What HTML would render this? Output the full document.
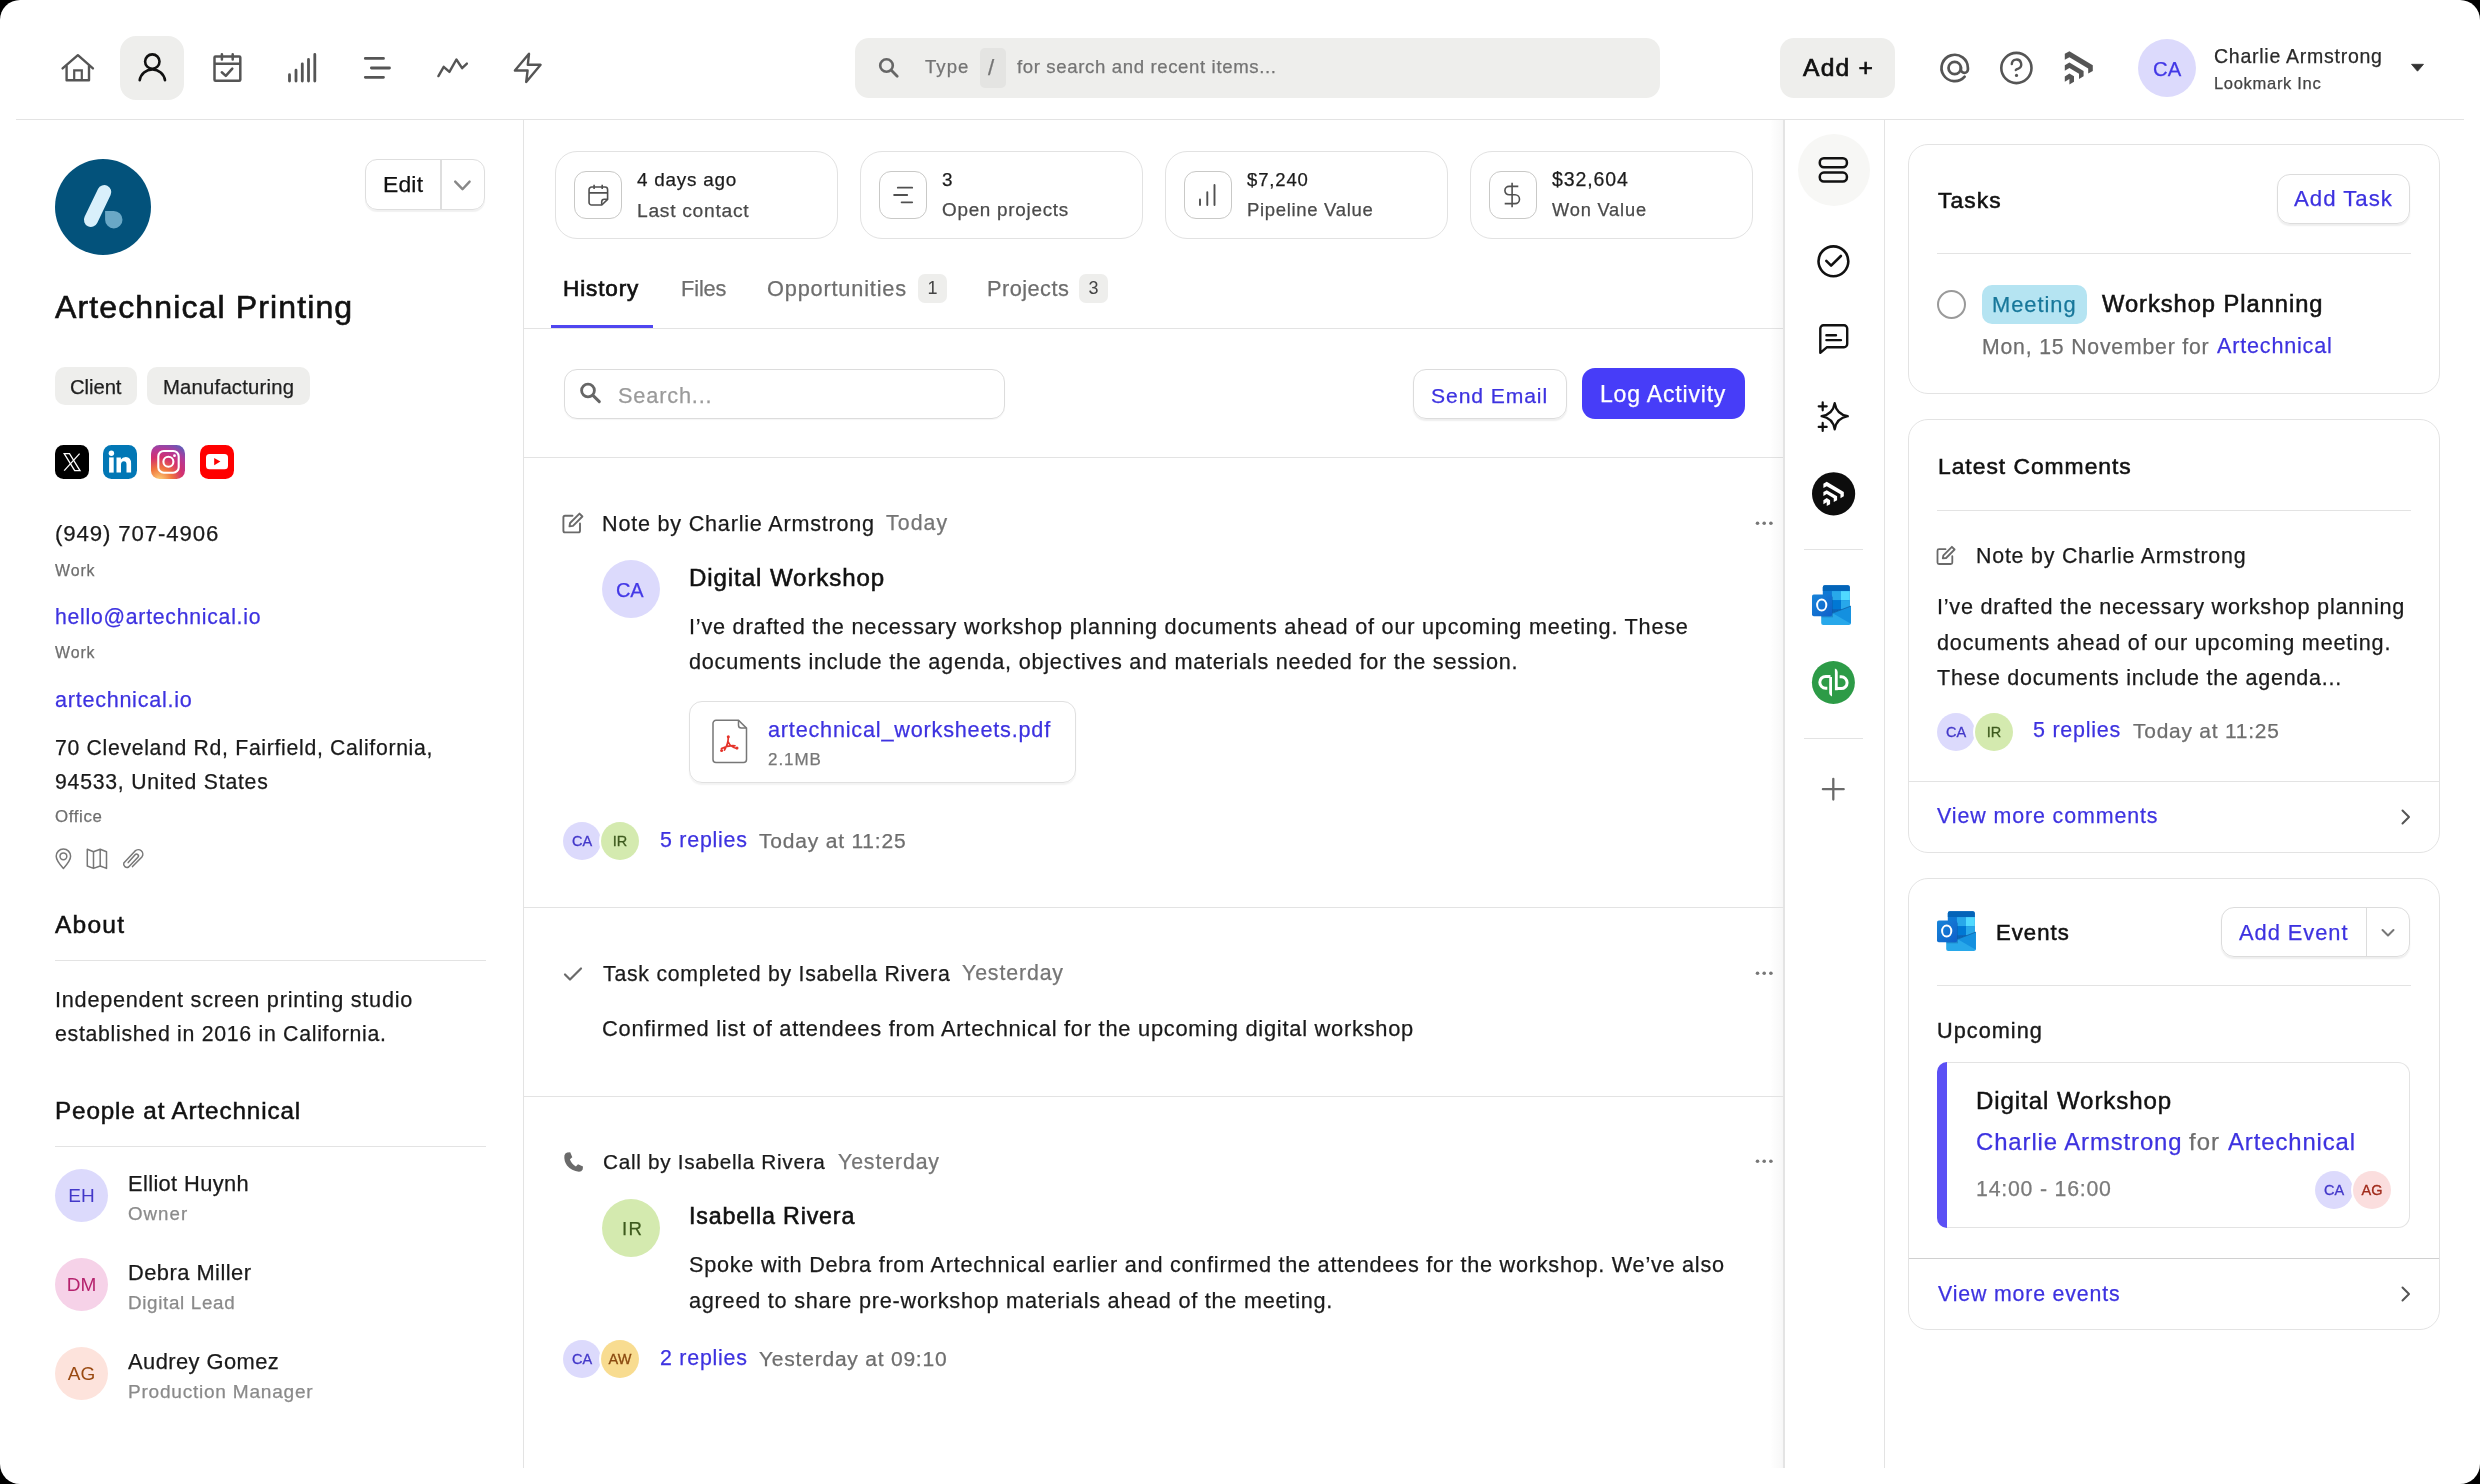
<!DOCTYPE html>
<html><head><meta charset="utf-8"><style>
html,body{margin:0;padding:0;background:#000;}
body{width:2480px;height:1484px;overflow:hidden;position:relative;font-family:"Liberation Sans",sans-serif;}
.frame{position:absolute;left:0;top:0;width:2480px;height:1484px;background:#fff;border-radius:20px;overflow:hidden;}
.t{position:absolute;white-space:nowrap;-webkit-font-smoothing:antialiased;will-change:transform;}
.b{position:absolute;}
</style></head><body><div class="frame">
<div class="b" style="left:16px;top:119px;width:2448px;height:1px;background:#e3e3e3"></div>
<div class="b" style="left:120px;top:36px;width:64px;height:64px;background:#eeeeec;border-radius:16px"></div>
<svg class="b" style="left:0px;top:0px" width="600" height="120" viewBox="0 0 600 120" fill="none"><path d="M62.6 68.4 L77.9 55.2 L92.9 68.4" stroke="#555555" stroke-width="2.4" stroke-linecap="round" stroke-linejoin="round"/>
<path d="M66.6 65.5 V80.3 H89 V65.5" stroke="#555555" stroke-width="2.4" stroke-linejoin="round"/>
<path d="M74.2 80.3 V70.4 H81.8 V80.3" stroke="#555555" stroke-width="2.2"/>
<circle cx="152.3" cy="61.6" r="7.2" stroke="#111" stroke-width="2.6"/>
<path d="M139.7 80.3 A12.8 12.8 0 0 1 165 80.3" stroke="#111" stroke-width="2.6" stroke-linecap="round"/>
<rect x="214.5" y="56.5" width="25.8" height="24.2" rx="1" stroke="#555555" stroke-width="2.5"/>
<path d="M214.5 63.8 H240.3" stroke="#555555" stroke-width="2.5"/>
<path d="M221.9 54.2 V59.4 M232.7 54.2 V59.4" stroke="#555555" stroke-width="2.5" stroke-linecap="round"/>
<path d="M221.8 72.3 L225.8 75.9 L232.3 68.6" stroke="#555555" stroke-width="2.5" stroke-linecap="round" stroke-linejoin="round"/>
<path d="M289.5 81 V74.7 M296 81 V70.2 M302.3 81 V63.8 M308.5 81 V59.4 M314.8 81 V54.5" stroke="#555555" stroke-width="2.8" stroke-linecap="round"/>
<path d="M365.3 58.4 H383.5 M371.4 68 H389.5 M365.3 77.3 H383.5" stroke="#555555" stroke-width="2.8" stroke-linecap="round"/>
<path d="M438.4 76.1 L443.7 66.8 L449.4 71.9 L456.4 59.5 L462.1 68.2 L466.9 63.6" stroke="#555555" stroke-width="2.4" stroke-linecap="round" stroke-linejoin="round"/>
<path d="M529 53.8 L514.9 70.5 H527.6 L526.2 82 L540.6 64.8 H527.8 Z" stroke="#555555" stroke-width="2.4" stroke-linejoin="round"/></svg>
<div class="b" style="left:855px;top:38px;width:805px;height:60px;background:#eeeeec;border-radius:14px"></div>
<div class="b" style="left:980px;top:48px;width:26px;height:40px;background:#e4e4e2;border-radius:5px"></div>
<svg class="b" style="left:870px;top:50px" width="40" height="40" viewBox="0 0 40 40" fill="none"><circle cx="16.5" cy="15.5" r="6.3" stroke="#666" stroke-width="2.6"/><path d="M21.3 20.3 L27.2 26.2" stroke="#666" stroke-width="2.8" stroke-linecap="round"/></svg>
<div class="t" style="left:924.5px;top:58.46px;font-size:18.60px;line-height:18.60px;color:#747474;-webkit-text-stroke:0.25px #747474;letter-spacing:1.012px;">Type</div>
<div class="t" style="left:987.5px;top:56.61px;font-size:22.32px;line-height:22.32px;color:#747474;-webkit-text-stroke:0.25px #747474;">/</div>
<div class="t" style="left:1016.5px;top:58.46px;font-size:18.60px;line-height:18.60px;color:#747474;-webkit-text-stroke:0.25px #747474;letter-spacing:0.625px;">for search and recent items...</div>
<div class="b" style="left:1780px;top:38px;width:115px;height:60px;background:#eeeeec;border-radius:14px"></div>
<div class="t" style="left:1803px;top:56.14px;font-size:24.64px;line-height:24.64px;color:#111;-webkit-text-stroke:0.70px #111;letter-spacing:1.225px;">Add +</div>
<div class="t" style="left:2214.4px;top:46.97px;font-size:19.53px;line-height:19.53px;color:#2a2a2a;-webkit-text-stroke:0.25px #2a2a2a;letter-spacing:0.735px;">Charlie Armstrong</div>
<div class="t" style="left:2214.4px;top:75.99px;font-size:16.55px;line-height:16.55px;color:#444;-webkit-text-stroke:0.25px #444;letter-spacing:0.680px;">Lookmark Inc</div>
<div class="b" style="left:2138px;top:39px;width:58px;height:58px;background:#dcdafc;border-radius:50%"></div>
<div class="t" style="left:2152.6px;top:58.84px;font-size:20.27px;line-height:20.27px;color:#4338e6;-webkit-text-stroke:0.25px #4338e6;letter-spacing:0.235px;">CA</div>
<svg class="b" style="left:2404px;top:58px" width="26" height="20" viewBox="0 0 26 20" fill="none"><path d="M7.5 6.3 H19.5 L13.5 13.2 Z" fill="#333" stroke="#333" stroke-width="0.8" stroke-linejoin="round"/></svg>
<svg class="b" style="left:0px;top:0px" width="2480" height="120" viewBox="0 0 2480 120" fill="none"><circle cx="1954.7" cy="68" r="6.2" stroke="#555" stroke-width="2.7"/>
<path d="M1960.9 67 V69.4 A3.5 3.5 0 0 0 1967.9 69.4 V68 A13.2 13.2 0 1 0 1964.66 76.66" stroke="#555" stroke-width="2.7" stroke-linecap="round"/>
<circle cx="2016.4" cy="68" r="15.1" stroke="#555" stroke-width="2.6"/>
<path d="M2011.8 64.1 A4.7 4.7 0 1 1 2018.3 68.6 Q2016.4 69.3 2015.8 70" stroke="#555" stroke-width="2.4" stroke-linecap="round"/>
<circle cx="2016.5" cy="75.4" r="1.6" fill="#555"/>
<path d="M2064.8 53.8 L2069.4 51.2 L2092.8 65.2 V71 L2088.2 73.6 V68.4 L2069.4 57.2 L2064.8 59.8 Z" fill="#555"/>
<path d="M2064.8 65.3 L2069.4 62.6 L2083.6 71 V76.3 L2079 78.9 V73.7 L2069.4 68 L2064.8 70.7 Z" fill="#555"/>
<path d="M2064.8 76.4 L2069.4 73.4 L2074 76.3 V81.8 L2069.4 84.5 V79.1 L2064.8 81.8 Z" fill="#555"/></svg>
<div class="b" style="left:523px;top:120px;width:1px;height:1348px;background:#e3e3e3"></div>
<svg class="b" style="left:55px;top:159px" width="96" height="96" viewBox="0 0 96 96" fill="none"><circle cx="48" cy="48" r="48" fill="#03527b"/><path d="M49.3 33 L35.9 60.9" stroke="#d9f0fb" stroke-width="14" stroke-linecap="round"/><path d="M50.1 52 H58.8 A8.7 8.7 0 1 1 50.1 60.7 Z" fill="#6aa8c6"/></svg>
<div class="b" style="left:365px;top:159px;width:120px;height:51px;box-sizing:border-box;border:1.5px solid #dedede;border-radius:12px;box-shadow:0 1.5px 1px rgba(0,0,0,0.06)"></div>
<div class="b" style="left:440px;top:160px;width:1.5px;height:50px;background:#dedede"></div>
<div class="t" style="left:383.3px;top:172.83px;font-size:22.88px;line-height:22.88px;color:#111;-webkit-text-stroke:0.25px #111;letter-spacing:0.193px;">Edit</div>
<svg class="b" style="left:450px;top:174px" width="24" height="20" viewBox="0 0 24 20" fill="none"><path d="M5.2 7.6 L12.5 15.2 L19.6 7.6" stroke="#888" stroke-width="2.4" stroke-linecap="round" stroke-linejoin="round"/></svg>
<div class="t" style="left:55px;top:291.24px;font-size:32.09px;line-height:32.09px;color:#111;-webkit-text-stroke:0.60px #111;letter-spacing:1.095px;">Artechnical Printing</div>
<div class="b" style="left:55px;top:367px;width:82px;height:38px;background:#eeeeec;border-radius:10px"></div>
<div class="b" style="left:147px;top:367px;width:163px;height:38px;background:#eeeeec;border-radius:10px"></div>
<div class="t" style="left:69.6px;top:376.84px;font-size:20.27px;line-height:20.27px;color:#1f1f1f;-webkit-text-stroke:0.25px #1f1f1f;letter-spacing:-0.066px;">Client</div>
<div class="t" style="left:162.6px;top:376.84px;font-size:20.27px;line-height:20.27px;color:#1f1f1f;-webkit-text-stroke:0.25px #1f1f1f;letter-spacing:0.211px;">Manufacturing</div>
<svg class="b" style="left:55px;top:445px" width="34" height="34" viewBox="0 0 34 34" fill="none"><rect width="34" height="34" rx="8.5" fill="#000"/><path d="M9.2 8.6 H14.5 L25 25.6 H19.7 Z" stroke="#fff" stroke-width="1.3" fill="none"/><path d="M24.6 8.6 L9.2 25.6" stroke="#fff" stroke-width="1.3"/></svg>
<svg class="b" style="left:103px;top:445px" width="34" height="34" viewBox="0 0 34 34" fill="none"><rect width="34" height="34" rx="8.5" fill="#0277b5"/><circle cx="8.4" cy="8.2" r="2.7" fill="#fff"/><rect x="6.1" y="12.4" width="4.6" height="15.2" fill="#fff"/><path d="M13.5 12.4 H17.9 V14.6 Q19.3 12 22.8 12 Q28.1 12 28.1 18.5 V27.6 H23.5 V19.5 Q23.5 16.3 20.9 16.3 Q18 16.3 18 19.8 V27.6 H13.5 Z" fill="#fff"/></svg>
<svg class="b" style="left:151px;top:445px" width="34" height="34" viewBox="0 0 34 34" fill="none"><defs><radialGradient id="ig" cx="0.25" cy="1.05" r="1.25"><stop offset="0" stop-color="#fdd57c"/><stop offset="0.3" stop-color="#f0763e"/><stop offset="0.55" stop-color="#d3306e"/><stop offset="0.75" stop-color="#b23a9a"/><stop offset="1" stop-color="#4f63c0"/></radialGradient></defs><rect width="34" height="34" rx="8.5" fill="url(#ig)"/><rect x="7.3" y="6" width="20.4" height="21.7" rx="5.5" stroke="#fff" stroke-width="2.1"/><circle cx="17.4" cy="16.8" r="5" stroke="#fff" stroke-width="2.1"/><circle cx="23.5" cy="10.7" r="1.4" fill="#fff"/></svg>
<svg class="b" style="left:200px;top:445px" width="34" height="34" viewBox="0 0 34 34" fill="none"><rect width="34" height="34" rx="8.5" fill="#ff0000"/><rect x="6" y="9" width="22" height="15.3" rx="3.5" fill="#fff"/><path d="M14.2 12.9 V20.2 L20.4 16.6 Z" fill="#ff0000"/></svg>
<div class="t" style="left:55.2px;top:522.98px;font-size:22.23px;line-height:22.23px;color:#1a1a1a;-webkit-text-stroke:0.25px #1a1a1a;letter-spacing:0.880px;">(949) 707-4906</div>
<div class="t" style="left:55.2px;top:562.54px;font-size:15.90px;line-height:15.90px;color:#6e6e6e;-webkit-text-stroke:0.25px #6e6e6e;letter-spacing:0.924px;">Work</div>
<div class="t" style="left:55.2px;top:606.05px;font-size:21.20px;line-height:21.20px;color:#3d32e0;-webkit-text-stroke:0.25px #3d32e0;letter-spacing:0.758px;">hello@artechnical.io</div>
<div class="t" style="left:55.2px;top:644.94px;font-size:15.90px;line-height:15.90px;color:#6e6e6e;-webkit-text-stroke:0.25px #6e6e6e;letter-spacing:0.924px;">Work</div>
<div class="t" style="left:55.2px;top:688.74px;font-size:21.58px;line-height:21.58px;color:#3d32e0;-webkit-text-stroke:0.25px #3d32e0;letter-spacing:0.736px;">artechnical.io</div>
<div class="t" style="left:55.2px;top:737.05px;font-size:21.20px;line-height:21.20px;color:#1a1a1a;-webkit-text-stroke:0.25px #1a1a1a;letter-spacing:0.696px;">70 Cleveland Rd, Fairfield, California,</div>
<div class="t" style="left:55.2px;top:771.05px;font-size:21.20px;line-height:21.20px;color:#1a1a1a;-webkit-text-stroke:0.25px #1a1a1a;letter-spacing:0.784px;">94533, United States</div>
<div class="t" style="left:55.2px;top:808.75px;font-size:16.83px;line-height:16.83px;color:#6e6e6e;-webkit-text-stroke:0.25px #6e6e6e;letter-spacing:0.657px;">Office</div>
<svg class="b" style="left:50px;top:845px" width="100" height="30" viewBox="0 0 100 30" fill="none"><path d="M13.4 23.4 Q6.2 15.5 6.2 11.2 A7.2 7.2 0 0 1 20.6 11.2 Q20.6 15.5 13.4 23.4 Z" stroke="#777" stroke-width="1.5" stroke-linejoin="round"/><circle cx="13.4" cy="11.3" r="3.4" stroke="#777" stroke-width="1.5"/>
<path d="M37.3 4.3 L43.5 6.7 L50.2 4.3 L56.5 6.7 V23.4 L50.2 21 L43.5 23.4 L37.3 21 Z M43.5 6.7 V23.4 M50.2 4.3 V21" stroke="#777" stroke-width="1.5" stroke-linejoin="round"/>
<path d="M82.5 21.6 L91.9 11.9 A4.55 4.55 0 0 0 85.1 5.9 L73.8 18 A3.4 3.4 0 0 0 78.6 22 L87.9 12.3 A1.7 1.7 0 0 0 85.1 9.7 L78.2 17.6" stroke="#777" stroke-width="1.5" stroke-linecap="round" stroke-linejoin="round"/></svg>
<div class="t" style="left:54.8px;top:913.22px;font-size:24.55px;line-height:24.55px;color:#111;-webkit-text-stroke:0.50px #111;letter-spacing:1.207px;">About</div>
<div class="b" style="left:55px;top:960px;width:431px;height:1px;background:#e3e3e3"></div>
<div class="t" style="left:54.8px;top:988.66px;font-size:21.67px;line-height:21.67px;color:#1a1a1a;-webkit-text-stroke:0.25px #1a1a1a;letter-spacing:0.758px;">Independent screen printing studio</div>
<div class="t" style="left:54.8px;top:1024.47px;font-size:21.30px;line-height:21.30px;color:#1a1a1a;-webkit-text-stroke:0.25px #1a1a1a;letter-spacing:0.702px;">established in 2016 in California.</div>
<div class="t" style="left:54.8px;top:1099.15px;font-size:24.27px;line-height:24.27px;color:#111;-webkit-text-stroke:0.50px #111;letter-spacing:0.858px;">People at Artechnical</div>
<div class="b" style="left:55px;top:1146px;width:431px;height:1px;background:#e3e3e3"></div>
<div class="b" style="left:55px;top:1169px;width:53px;height:53px;background:#dcdafc;border-radius:50%"></div>
<div class="t" style="left:55px;top:1169px;width:53px;height:53px;line-height:53px;text-align:center;font-size:19px;color:#4338c9">EH</div>
<div class="t" style="left:128px;top:1172.50px;font-size:21.86px;line-height:21.86px;color:#1a1a1a;-webkit-text-stroke:0.25px #1a1a1a;letter-spacing:0.361px;">Elliot Huynh</div>
<div class="t" style="left:128px;top:1204.68px;font-size:18.69px;line-height:18.69px;color:#8a8a8a;-webkit-text-stroke:0.25px #8a8a8a;letter-spacing:1.036px;">Owner</div>
<div class="b" style="left:55px;top:1258px;width:53px;height:53px;background:#f6d2e8;border-radius:50%"></div>
<div class="t" style="left:55px;top:1258px;width:53px;height:53px;line-height:53px;text-align:center;font-size:19px;color:#b5226d">DM</div>
<div class="t" style="left:128px;top:1261.50px;font-size:21.86px;line-height:21.86px;color:#1a1a1a;-webkit-text-stroke:0.25px #1a1a1a;letter-spacing:0.463px;">Debra Miller</div>
<div class="t" style="left:128px;top:1293.60px;font-size:18.79px;line-height:18.79px;color:#8a8a8a;-webkit-text-stroke:0.25px #8a8a8a;letter-spacing:0.679px;">Digital Lead</div>
<div class="b" style="left:55px;top:1347px;width:53px;height:53px;background:#fde3dc;border-radius:50%"></div>
<div class="t" style="left:55px;top:1347px;width:53px;height:53px;line-height:53px;text-align:center;font-size:19px;color:#9a4a12">AG</div>
<div class="t" style="left:128px;top:1350.50px;font-size:21.86px;line-height:21.86px;color:#1a1a1a;-webkit-text-stroke:0.25px #1a1a1a;letter-spacing:0.452px;">Audrey Gomez</div>
<div class="t" style="left:128px;top:1382.36px;font-size:19.07px;line-height:19.07px;color:#8a8a8a;-webkit-text-stroke:0.25px #8a8a8a;letter-spacing:0.760px;">Production Manager</div>
<div class="b" style="left:555px;top:151px;width:283px;height:88px;box-sizing:border-box;border:1.5px solid #e2e2e2;border-radius:22px"></div>
<div class="b" style="left:573.5px;top:170.5px;width:48px;height:48px;box-sizing:border-box;border:1.5px solid #c9c9c7;border-radius:12px"></div>
<svg class="b" style="left:573.5px;top:170.5px" width="48" height="48" viewBox="0 0 48 48" fill="none"><path d="M17.66 16.06 H31 A2.6 2.6 0 0 1 33.6 18.66 V28.4 L27.8 34 H17.66 A2.6 2.6 0 0 1 15.06 31.4 V18.66 A2.6 2.6 0 0 1 17.66 16.06 Z" stroke="#505050" stroke-width="1.6" stroke-linejoin="round"/><path d="M15.06 21.9 H33.6 M20.1 13.8 V18.1 M28.2 13.8 V18.1" stroke="#505050" stroke-width="1.6"/><path d="M27.7 33.8 V30.8 A2.6 2.6 0 0 1 30.3 28.2 H33.4" stroke="#505050" stroke-width="1.6" stroke-linejoin="round"/></svg>
<div class="t" style="left:637px;top:171.02px;font-size:18.88px;line-height:18.88px;color:#1c1c1c;-webkit-text-stroke:0.25px #1c1c1c;letter-spacing:0.772px;">4 days ago</div>
<div class="t" style="left:637px;top:200.50px;font-size:19.25px;line-height:19.25px;color:#4a4a4a;-webkit-text-stroke:0.25px #4a4a4a;letter-spacing:0.710px;">Last contact</div>
<div class="b" style="left:860px;top:151px;width:283px;height:88px;box-sizing:border-box;border:1.5px solid #e2e2e2;border-radius:22px"></div>
<div class="b" style="left:878.5px;top:170.5px;width:48px;height:48px;box-sizing:border-box;border:1.5px solid #c9c9c7;border-radius:12px"></div>
<svg class="b" style="left:878.5px;top:170.5px" width="48" height="48" viewBox="0 0 48 48" fill="none"><path d="M18.8 16.7 H33.2 M15.1 24 H28.2 M22.6 31.3 H33.2" stroke="#505050" stroke-width="1.8" stroke-linecap="round"/></svg>
<div class="t" style="left:942px;top:171.02px;font-size:18.88px;line-height:18.88px;color:#1c1c1c;-webkit-text-stroke:0.25px #1c1c1c;">3</div>
<div class="t" style="left:942px;top:200.82px;font-size:18.88px;line-height:18.88px;color:#4a4a4a;-webkit-text-stroke:0.25px #4a4a4a;letter-spacing:0.737px;">Open projects</div>
<div class="b" style="left:1165px;top:151px;width:283px;height:88px;box-sizing:border-box;border:1.5px solid #e2e2e2;border-radius:22px"></div>
<div class="b" style="left:1183.5px;top:170.5px;width:48px;height:48px;box-sizing:border-box;border:1.5px solid #c9c9c7;border-radius:12px"></div>
<svg class="b" style="left:1183.5px;top:170.5px" width="48" height="48" viewBox="0 0 48 48" fill="none"><path d="M16 34 V28.4 M23.3 34 V21.1 M30.5 34 V14" stroke="#505050" stroke-width="1.9" stroke-linecap="round"/></svg>
<div class="t" style="left:1247px;top:171.33px;font-size:18.51px;line-height:18.51px;color:#1c1c1c;-webkit-text-stroke:0.25px #1c1c1c;letter-spacing:0.852px;">$7,240</div>
<div class="t" style="left:1247px;top:201.13px;font-size:18.51px;line-height:18.51px;color:#4a4a4a;-webkit-text-stroke:0.25px #4a4a4a;letter-spacing:0.677px;">Pipeline Value</div>
<div class="b" style="left:1470px;top:151px;width:283px;height:88px;box-sizing:border-box;border:1.5px solid #e2e2e2;border-radius:22px"></div>
<div class="b" style="left:1488.5px;top:170.5px;width:48px;height:48px;box-sizing:border-box;border:1.5px solid #c9c9c7;border-radius:12px"></div>
<svg class="b" style="left:1488.5px;top:170.5px" width="48" height="48" viewBox="0 0 48 48" fill="none"><path d="M23.1 11.7 V36.3" stroke="#505050" stroke-width="1.6"/><path d="M29.3 15.4 H20.1 A4.2 4.2 0 0 0 20.1 23.8 H26.1 A4.4 4.4 0 0 1 26.1 32.6 H15.7" stroke="#505050" stroke-width="1.6"/></svg>
<div class="t" style="left:1552px;top:170.47px;font-size:19.53px;line-height:19.53px;color:#1c1c1c;-webkit-text-stroke:0.25px #1c1c1c;letter-spacing:0.886px;">$32,604</div>
<div class="t" style="left:1552px;top:201.37px;font-size:18.23px;line-height:18.23px;color:#4a4a4a;-webkit-text-stroke:0.25px #4a4a4a;letter-spacing:0.823px;">Won Value</div>
<div class="t" style="left:563.4px;top:277.75px;font-size:22.51px;line-height:22.51px;color:#111;-webkit-text-stroke:0.70px #111;letter-spacing:0.878px;">History</div>
<div class="t" style="left:680.5px;top:278.38px;font-size:21.76px;line-height:21.76px;color:#6e6e6e;-webkit-text-stroke:0.25px #6e6e6e;letter-spacing:-0.111px;">Files</div>
<div class="t" style="left:767px;top:278.38px;font-size:21.76px;line-height:21.76px;color:#6e6e6e;-webkit-text-stroke:0.25px #6e6e6e;letter-spacing:0.812px;">Opportunities</div>
<div class="t" style="left:986.6px;top:278.38px;font-size:21.76px;line-height:21.76px;color:#6e6e6e;-webkit-text-stroke:0.25px #6e6e6e;letter-spacing:0.456px;">Projects</div>
<div class="b" style="left:918px;top:274.3px;width:29px;height:28.5px;background:#eeeeec;border-radius:7px"></div>
<div class="t" style="left:918px;top:274.3px;width:29px;height:28.5px;line-height:28.5px;text-align:center;font-size:18px;color:#444">1</div>
<div class="b" style="left:1079px;top:274.3px;width:29px;height:28.5px;background:#eeeeec;border-radius:7px"></div>
<div class="t" style="left:1079px;top:274.3px;width:29px;height:28.5px;line-height:28.5px;text-align:center;font-size:18px;color:#444">3</div>
<div class="b" style="left:524px;top:328px;width:1260px;height:1px;background:#e3e3e3"></div>
<div class="b" style="left:551px;top:325px;width:102px;height:3px;background:#4f46f0"></div>
<div class="b" style="left:563.5px;top:368.5px;width:441px;height:50px;box-sizing:border-box;border:1.5px solid #dcdcdc;border-radius:13px;box-shadow:0 1px 1px rgba(0,0,0,0.04)"></div>
<svg class="b" style="left:575px;top:375px" width="36" height="36" viewBox="0 0 36 36" fill="none"><circle cx="13" cy="15.5" r="6.4" stroke="#666" stroke-width="2.8"/><path d="M17.9 20.4 L24.3 26.6" stroke="#666" stroke-width="3" stroke-linecap="round"/></svg>
<div class="t" style="left:617.5px;top:384.58px;font-size:21.76px;line-height:21.76px;color:#9a9a9a;-webkit-text-stroke:0.25px #9a9a9a;letter-spacing:0.819px;">Search...</div>
<div class="b" style="left:1412.5px;top:368.5px;width:154px;height:50px;box-sizing:border-box;border:1.5px solid #dcdcdc;border-radius:13px;box-shadow:0 1.5px 1.5px rgba(0,0,0,0.07)"></div>
<div class="t" style="left:1431.3px;top:385.13px;font-size:21.11px;line-height:21.11px;color:#3d32e0;-webkit-text-stroke:0.25px #3d32e0;letter-spacing:0.903px;">Send Email</div>
<div class="b" style="left:1581.5px;top:368px;width:163.5px;height:51px;background:#473df8;border-radius:13px"></div>
<div class="t" style="left:1600.3px;top:383.48px;font-size:23.06px;line-height:23.06px;color:#fff;-webkit-text-stroke:0.25px #fff;letter-spacing:0.798px;">Log Activity</div>
<div class="b" style="left:524px;top:457px;width:1260px;height:1px;background:#e3e3e3"></div>
<div class="b" style="left:1770px;top:120px;width:13px;height:1348px;background:linear-gradient(to right, rgba(0,0,0,0), rgba(0,0,0,0.03))"></div>
<div class="b" style="left:1783px;top:120px;width:2px;height:1348px;background:#e4e4e4"></div>
<svg class="b" style="left:560px;top:510px" width="28" height="28" viewBox="0 0 28 28" fill="none"><path d="M12.5 5.8 H5 A1.6 1.6 0 0 0 3.4 7.4 V20.8 A1.6 1.6 0 0 0 5 22.4 H18.4 A1.6 1.6 0 0 0 20 20.8 V13.5" stroke="#6a6a6a" stroke-width="1.9" stroke-linecap="round"/><path d="M9.5 16.3 L10.1 13 L19.5 3.6 L22.4 6.5 L13 15.9 Z" stroke="#6a6a6a" stroke-width="1.9" stroke-linejoin="round"/></svg>
<div class="t" style="left:602.2px;top:512.74px;font-size:21.58px;line-height:21.58px;color:#1a1a1a;-webkit-text-stroke:0.25px #1a1a1a;letter-spacing:0.793px;">Note by Charlie Armstrong</div>
<div class="t" style="left:886px;top:512.97px;font-size:21.30px;line-height:21.30px;color:#757575;-webkit-text-stroke:0.25px #757575;letter-spacing:1.069px;">Today</div>
<svg class="b" style="left:1750px;top:515px" width="30" height="16" viewBox="0 0 30 16" fill="none"><circle cx="7.5" cy="8.2" r="1.8" fill="#777"/><circle cx="14.2" cy="8.2" r="1.8" fill="#777"/><circle cx="20.9" cy="8.2" r="1.8" fill="#777"/></svg>
<div class="b" style="left:601.5px;top:560px;width:58px;height:58px;background:#dcdafc;border-radius:50%"></div>
<div class="t" style="left:616.3px;top:580.07px;font-size:20.00px;line-height:20.00px;color:#4338e6;-webkit-text-stroke:0.25px #4338e6;letter-spacing:-0.077px;">CA</div>
<div class="t" style="left:689.4px;top:566.31px;font-size:24.09px;line-height:24.09px;color:#111;-webkit-text-stroke:0.55px #111;letter-spacing:0.911px;">Digital Workshop</div>
<div class="t" style="left:689.4px;top:615.96px;font-size:21.67px;line-height:21.67px;color:#1a1a1a;-webkit-text-stroke:0.25px #1a1a1a;letter-spacing:0.777px;">I’ve drafted the necessary workshop planning documents ahead of our upcoming meeting. These</div>
<div class="t" style="left:689.4px;top:651.16px;font-size:21.67px;line-height:21.67px;color:#1a1a1a;-webkit-text-stroke:0.25px #1a1a1a;letter-spacing:0.754px;">documents include the agenda, objectives and materials needed for the session.</div>
<div class="b" style="left:689px;top:701px;width:387px;height:81.5px;box-sizing:border-box;border:1.5px solid #e0e0e0;border-radius:13px;box-shadow:0 1.5px 1.5px rgba(0,0,0,0.05)"></div>
<svg class="b" style="left:710px;top:717px" width="42" height="50" viewBox="0 0 42 50" fill="none"><path d="M6 3.3 H28.5 L36.5 11.1 V42.5 A3 3 0 0 1 33.5 45.5 H6 A3 3 0 0 1 3 42.5 V6.3 A3 3 0 0 1 6 3.3 Z" stroke="#777" stroke-width="1.5"/><path d="M28.5 3.3 V8.3 A2.8 2.8 0 0 0 31.3 11.1 H36.5" stroke="#777" stroke-width="1.5"/><path d="M18.3 19.8 Q18.4 27 14.5 33 M18.6 25.5 Q20.5 30 26.8 31.5 M11.5 31.5 Q18 28.2 25 28.8" stroke="#e5332a" stroke-width="1.7" stroke-linecap="round" fill="none"/><circle cx="18.3" cy="19.8" r="1.5" fill="#e5332a"/><circle cx="11.6" cy="33.4" r="1.5" fill="#e5332a"/><circle cx="27" cy="31" r="1.5" fill="#e5332a"/></svg>
<div class="t" style="left:767.8px;top:719.26px;font-size:21.67px;line-height:21.67px;color:#3d32e0;-webkit-text-stroke:0.25px #3d32e0;letter-spacing:0.791px;">artechnical_worksheets.pdf</div>
<div class="t" style="left:767.8px;top:751.49px;font-size:17.02px;line-height:17.02px;color:#777;-webkit-text-stroke:0.25px #777;letter-spacing:0.926px;">2.1MB</div>
<div class="b" style="left:563px;top:821.5px;width:38px;height:38px;background:#dcdafc;border-radius:50%"></div>
<div class="t" style="left:563px;top:821.5px;width:38px;height:38px;line-height:38px;text-align:center;font-size:14.5px;-webkit-text-stroke:0.3px currentColor;color:#4338c9">CA</div>
<div class="b" style="left:601px;top:821.5px;width:38px;height:38px;background:#d4eaaf;border-radius:50%;box-shadow:0 0 0 2px #fff"></div>
<div class="t" style="left:601px;top:821.5px;width:38px;height:38px;line-height:38px;text-align:center;font-size:14.5px;-webkit-text-stroke:0.3px currentColor;color:#3e5a1e">IR</div>
<div class="t" style="left:659.5px;top:829.89px;font-size:21.39px;line-height:21.39px;color:#3d32e0;-webkit-text-stroke:0.25px #3d32e0;letter-spacing:0.761px;">5 replies</div>
<div class="t" style="left:759px;top:830.21px;font-size:21.02px;line-height:21.02px;color:#6e6e6e;-webkit-text-stroke:0.25px #6e6e6e;letter-spacing:0.789px;">Today at 11:25</div>
<div class="b" style="left:524px;top:907px;width:1260px;height:1px;background:#e3e3e3"></div>
<svg class="b" style="left:560px;top:960px" width="28" height="28" viewBox="0 0 28 28" fill="none"><path d="M5 14.5 L10 19.5 L21 8.5" stroke="#6a6a6a" stroke-width="2.2" stroke-linecap="round" stroke-linejoin="round"/></svg>
<div class="t" style="left:602.8px;top:963.51px;font-size:21.25px;line-height:21.25px;color:#1a1a1a;-webkit-text-stroke:0.25px #1a1a1a;letter-spacing:0.758px;">Task completed by Isabella Rivera</div>
<div class="t" style="left:962px;top:963.47px;font-size:21.30px;line-height:21.30px;color:#757575;-webkit-text-stroke:0.25px #757575;letter-spacing:0.884px;">Yesterday</div>
<svg class="b" style="left:1750px;top:965px" width="30" height="16" viewBox="0 0 30 16" fill="none"><circle cx="7.5" cy="8.2" r="1.8" fill="#777"/><circle cx="14.2" cy="8.2" r="1.8" fill="#777"/><circle cx="20.9" cy="8.2" r="1.8" fill="#777"/></svg>
<div class="t" style="left:602px;top:1018.00px;font-size:21.86px;line-height:21.86px;color:#1a1a1a;-webkit-text-stroke:0.25px #1a1a1a;letter-spacing:0.737px;">Confirmed list of attendees from Artechnical for the upcoming digital workshop</div>
<div class="b" style="left:524px;top:1095.5px;width:1260px;height:1px;background:#e3e3e3"></div>
<svg class="b" style="left:560px;top:1148px" width="28" height="28" viewBox="0 0 28 28" fill="none"><path d="M7.2 4.5 L10.2 4.2 L12.3 9.3 L9.9 11.2 Q11.2 15.6 15.9 18.4 L18 16.2 L23 18.5 L22.7 21.6 Q21.5 23.8 19 23.8 Q11.5 23 7 17.5 Q3.8 13 4.4 7.6 Q5 5.2 7.2 4.5 Z" fill="#6a6a6a"/></svg>
<div class="t" style="left:602.8px;top:1152.04px;font-size:20.74px;line-height:20.74px;color:#1a1a1a;-webkit-text-stroke:0.25px #1a1a1a;letter-spacing:0.706px;">Call by Isabella Rivera</div>
<div class="t" style="left:838px;top:1151.57px;font-size:21.30px;line-height:21.30px;color:#757575;-webkit-text-stroke:0.25px #757575;letter-spacing:0.884px;">Yesterday</div>
<svg class="b" style="left:1750px;top:1153px" width="30" height="16" viewBox="0 0 30 16" fill="none"><circle cx="7.5" cy="8.2" r="1.8" fill="#777"/><circle cx="14.2" cy="8.2" r="1.8" fill="#777"/><circle cx="20.9" cy="8.2" r="1.8" fill="#777"/></svg>
<div class="b" style="left:601.5px;top:1198.5px;width:58px;height:58px;background:#d4eaaf;border-radius:50%"></div>
<div class="t" style="left:621.7px;top:1220.26px;font-size:18.60px;line-height:18.60px;color:#3e5a1e;-webkit-text-stroke:0.25px #3e5a1e;letter-spacing:1.400px;">IR</div>
<div class="t" style="left:689px;top:1205.02px;font-size:23.25px;line-height:23.25px;color:#111;-webkit-text-stroke:0.55px #111;letter-spacing:0.827px;">Isabella Rivera</div>
<div class="t" style="left:689px;top:1253.66px;font-size:21.67px;line-height:21.67px;color:#1a1a1a;-webkit-text-stroke:0.25px #1a1a1a;letter-spacing:0.747px;">Spoke with Debra from Artechnical earlier and confirmed the attendees for the workshop. We’ve also</div>
<div class="t" style="left:689px;top:1289.66px;font-size:21.67px;line-height:21.67px;color:#1a1a1a;-webkit-text-stroke:0.25px #1a1a1a;letter-spacing:0.764px;">agreed to share pre-workshop materials ahead of the meeting.</div>
<div class="b" style="left:563px;top:1339.5px;width:38px;height:38px;background:#dcdafc;border-radius:50%"></div>
<div class="t" style="left:563px;top:1339.5px;width:38px;height:38px;line-height:38px;text-align:center;font-size:14.5px;-webkit-text-stroke:0.3px currentColor;color:#4338c9">CA</div>
<div class="b" style="left:601px;top:1339.5px;width:38px;height:38px;background:#f8dc90;border-radius:50%;box-shadow:0 0 0 2px #fff"></div>
<div class="t" style="left:601px;top:1339.5px;width:38px;height:38px;line-height:38px;text-align:center;font-size:14.5px;-webkit-text-stroke:0.3px currentColor;color:#8a4a10">AW</div>
<div class="t" style="left:659.5px;top:1347.89px;font-size:21.39px;line-height:21.39px;color:#3d32e0;-webkit-text-stroke:0.25px #3d32e0;letter-spacing:0.761px;">2 replies</div>
<div class="t" style="left:759px;top:1348.21px;font-size:21.02px;line-height:21.02px;color:#6e6e6e;-webkit-text-stroke:0.25px #6e6e6e;letter-spacing:0.773px;">Yesterday at 09:10</div>
<div class="b" style="left:1883.5px;top:120px;width:1.5px;height:1348px;background:#e3e3e3"></div>
<div class="b" style="left:1797.5px;top:134px;width:72px;height:72px;background:#f7f7f5;border-radius:50%"></div>
<svg class="b" style="left:0px;top:0px" width="2480" height="1484" viewBox="0 0 2480 1484" fill="none"><rect x="1819.8" y="158.3" width="27.1" height="8.9" rx="4" stroke="#111" stroke-width="2.5"/>
<rect x="1819.8" y="172.6" width="27.1" height="8.9" rx="4" stroke="#111" stroke-width="2.5"/>
<circle cx="1833.4" cy="261.3" r="14.9" stroke="#111" stroke-width="2.6"/>
<path d="M1826.3 260.8 L1831.1 265.6 L1840.9 256" stroke="#111" stroke-width="2.6" stroke-linecap="round" stroke-linejoin="round"/>
<path d="M1823.5 325.3 H1844 A3.2 3.2 0 0 1 1847.2 328.5 V344 A3.2 3.2 0 0 1 1844 347.2 H1827 L1820.3 352.8 V328.5 A3.2 3.2 0 0 1 1823.5 325.3 Z" stroke="#111" stroke-width="2.4" stroke-linejoin="round"/>
<path d="M1826.4 335.2 H1836 M1826.4 340.1 H1841" stroke="#111" stroke-width="2.4" stroke-linecap="round"/>
<path d="M1834.7 403.2 Q1836.5 414.3 1847.8 416.2 Q1836.5 418.1 1834.7 429.3 Q1832.9 418.1 1821.6 416.2 Q1832.9 414.3 1834.7 403.2 Z" stroke="#111" stroke-width="2.3" stroke-linejoin="round"/>
<path d="M1822.7 402.3 V410.3 M1818.7 406.3 H1826.7 M1822.7 422.9 V430.9 M1818.7 426.9 H1826.7" stroke="#111" stroke-width="2.2" stroke-linecap="round"/>
<circle cx="1833.6" cy="493.8" r="21.6" fill="#0d0d0d"/>
<g fill="#fff" transform="translate(1833.6 494) scale(0.73) translate(-2078.8 -67.9)"><path d="M2064.8 53.8 L2069.4 51.2 L2092.8 65.2 V71 L2088.2 73.6 V68.4 L2069.4 57.2 L2064.8 59.8 Z"/><path d="M2064.8 65.3 L2069.4 62.6 L2083.6 71 V76.3 L2079 78.9 V73.7 L2069.4 68 L2064.8 70.7 Z"/><path d="M2064.8 76.4 L2069.4 73.4 L2074 76.3 V81.8 L2069.4 84.5 V79.1 L2064.8 81.8 Z"/></g>
<circle cx="1833.4" cy="682.5" r="21.5" fill="#2d9b47"/>
<path d="M1830.5 676.4 H1825.7 A5.9 5.9 0 0 0 1825.7 688.2 H1827.3" stroke="#fff" stroke-width="3" fill="none"/>
<path d="M1829.2 676.9 H1832 V696.5 Q1829.2 695.5 1829.2 693 Z" fill="#fff"/>
<path d="M1836.4 688.6 H1841.2 A5.9 5.9 0 0 0 1841.2 676.8 H1839.6" stroke="#fff" stroke-width="3" fill="none"/>
<path d="M1837.7 690.2 H1834.9 V668.6 Q1837.7 669.6 1837.7 672 Z" fill="#fff"/>
<path d="M1833.3 778.8 V799.6 M1822.9 789.2 H1843.7" stroke="#6a6a6a" stroke-width="2.3" stroke-linecap="round"/></svg>
<div class="b" style="left:1804px;top:548.5px;width:59px;height:1px;background:#e3e3e3"></div>
<div class="b" style="left:1804px;top:737.5px;width:59px;height:1px;background:#e3e3e3"></div>
<svg class="b" style="left:1811.8px;top:584.9px" width="41" height="41" viewBox="0 0 41 41" fill="none"><defs><linearGradient id="og584" x1="0" y1="0" x2="1" y2="1"><stop offset="0" stop-color="#1784d9"/><stop offset="1" stop-color="#0f5fc9"/></linearGradient></defs>
<path d="M10.8 2.3 A2 2 0 0 1 12.8 0.3 H35.8 A2 2 0 0 1 37.8 2.3 V28.5 H10.8 Z" fill="#0f78d4"/>
<path d="M10.8 2.3 A2 2 0 0 1 12.8 0.3 H35.8 A2 2 0 0 1 37.8 2.3 V6.1 H10.8 Z" fill="#0364b8"/>
<rect x="19.9" y="6.1" width="9.1" height="9.1" fill="#28a8ea"/><rect x="29" y="6.1" width="8.8" height="9.1" fill="#50d9ff"/>
<rect x="19.9" y="15.2" width="9.1" height="9" fill="#0078d4"/><rect x="29" y="15.2" width="8.8" height="9" fill="#28a8ea"/>
<rect x="10.8" y="24.2" width="18.2" height="4.3" fill="#0a64b8"/>
<path d="M9.2 21.5 L20.3 28 L38.9 20.9 V38 A2 2 0 0 1 36.9 40 H11.2 A2 2 0 0 1 9.2 38 Z" fill="#28a8ea"/>
<path d="M20.3 28 L38.9 20.9 V38.8 Z" fill="#1490df"/>
<path d="M20.3 28.2 L38.9 21" stroke="#0a2f6e" stroke-width="0.6" opacity="0.7"/>
<rect x="9.5" y="12" width="11.5" height="20.3" fill="#0a4f94" opacity="0.35"/>
<rect x="0" y="9.4" width="20.2" height="21.9" rx="1.8" fill="url(#og584)"/>
<ellipse cx="9.7" cy="20" rx="4.6" ry="5.5" stroke="#fff" stroke-width="2" fill="none"/></svg>
<div class="b" style="left:1908px;top:144px;width:532px;height:250px;box-sizing:border-box;border:1.5px solid #e3e3e3;border-radius:20px"></div>
<div class="t" style="left:1938.3px;top:188.51px;font-size:22.79px;line-height:22.79px;color:#111;-webkit-text-stroke:0.55px #111;letter-spacing:1.096px;">Tasks</div>
<div class="b" style="left:2276.5px;top:173.5px;width:133.5px;height:50px;box-sizing:border-box;border:1.5px solid #dcdcdc;border-radius:13px;box-shadow:0 1.5px 1.5px rgba(0,0,0,0.07)"></div>
<div class="t" style="left:2294px;top:188.48px;font-size:22.23px;line-height:22.23px;color:#3d32e0;-webkit-text-stroke:0.25px #3d32e0;letter-spacing:0.979px;">Add Task</div>
<div class="b" style="left:1937px;top:253px;width:474px;height:1px;background:#e3e3e3"></div>
<div class="b" style="left:1936.6px;top:289.9px;width:29px;height:29px;box-sizing:border-box;border:2px solid #9a9a9a;border-radius:50%"></div>
<div class="b" style="left:1981.6px;top:285px;width:105px;height:39px;background:#b5e4f2;border-radius:10px"></div>
<div class="t" style="left:1991.8px;top:294.20px;font-size:21.86px;line-height:21.86px;color:#17779a;-webkit-text-stroke:0.25px #17779a;letter-spacing:0.975px;">Meeting</div>
<div class="t" style="left:2102.4px;top:292.63px;font-size:23.71px;line-height:23.71px;color:#111;-webkit-text-stroke:0.55px #111;letter-spacing:0.965px;">Workshop Planning</div>
<div class="t" style="left:1982px;top:335.65px;font-size:21.20px;line-height:21.20px;color:#6e6e6e;-webkit-text-stroke:0.25px #6e6e6e;letter-spacing:0.836px;">Mon, 15 November for</div>
<div class="t" style="left:2216.6px;top:335.34px;font-size:21.58px;line-height:21.58px;color:#3d32e0;-webkit-text-stroke:0.25px #3d32e0;letter-spacing:0.803px;">Artechnical</div>
<div class="b" style="left:1908px;top:418.5px;width:532px;height:434.5px;box-sizing:border-box;border:1.5px solid #e3e3e3;border-radius:20px"></div>
<div class="t" style="left:1938px;top:455.13px;font-size:22.88px;line-height:22.88px;color:#111;-webkit-text-stroke:0.55px #111;letter-spacing:0.964px;">Latest Comments</div>
<div class="b" style="left:1937px;top:509.5px;width:474px;height:1px;background:#e3e3e3"></div>
<svg class="b" style="left:1934px;top:543px" width="28" height="28" viewBox="0 0 28 28" fill="none"><path d="M11.5 6.2 H5 A1.5 1.5 0 0 0 3.5 7.7 V19.5 A1.5 1.5 0 0 0 5 21 H16.8 A1.5 1.5 0 0 0 18.3 19.5 V13.2" stroke="#6a6a6a" stroke-width="1.8" stroke-linecap="round"/><path d="M8.8 15.3 L9.4 12.3 L17.9 3.8 L20.6 6.5 L12.1 15 Z" stroke="#6a6a6a" stroke-width="1.8" stroke-linejoin="round"/></svg>
<div class="t" style="left:1975.9px;top:545.89px;font-size:21.39px;line-height:21.39px;color:#1a1a1a;-webkit-text-stroke:0.25px #1a1a1a;letter-spacing:0.787px;">Note by Charlie Armstrong</div>
<div class="t" style="left:1936.5px;top:596.26px;font-size:21.67px;line-height:21.67px;color:#1a1a1a;-webkit-text-stroke:0.25px #1a1a1a;letter-spacing:0.761px;">I’ve drafted the necessary workshop planning</div>
<div class="t" style="left:1936.5px;top:632.00px;font-size:21.62px;line-height:21.62px;color:#1a1a1a;-webkit-text-stroke:0.25px #1a1a1a;letter-spacing:0.814px;">documents ahead of our upcoming meeting.</div>
<div class="t" style="left:1936.5px;top:667.81px;font-size:21.48px;line-height:21.48px;color:#1a1a1a;-webkit-text-stroke:0.25px #1a1a1a;letter-spacing:0.787px;">These documents include the agenda...</div>
<div class="b" style="left:1936.5px;top:713px;width:38px;height:38px;background:#dcdafc;border-radius:50%"></div>
<div class="t" style="left:1936.5px;top:713px;width:38px;height:38px;line-height:38px;text-align:center;font-size:14.5px;-webkit-text-stroke:0.3px currentColor;color:#4338c9">CA</div>
<div class="b" style="left:1974.5px;top:713px;width:38px;height:38px;background:#d4eaaf;border-radius:50%;box-shadow:0 0 0 2px #fff"></div>
<div class="t" style="left:1974.5px;top:713px;width:38px;height:38px;line-height:38px;text-align:center;font-size:14.5px;-webkit-text-stroke:0.3px currentColor;color:#3e5a1e">IR</div>
<div class="t" style="left:2033.2px;top:720.41px;font-size:21.48px;line-height:21.48px;color:#3d32e0;-webkit-text-stroke:0.25px #3d32e0;letter-spacing:0.764px;">5 replies</div>
<div class="t" style="left:2132.8px;top:720.89px;font-size:20.93px;line-height:20.93px;color:#6e6e6e;-webkit-text-stroke:0.25px #6e6e6e;letter-spacing:0.786px;">Today at 11:25</div>
<div class="b" style="left:1909px;top:780.5px;width:530px;height:1px;background:#e3e3e3"></div>
<div class="t" style="left:1937px;top:805.89px;font-size:21.39px;line-height:21.39px;color:#3d32e0;-webkit-text-stroke:0.25px #3d32e0;letter-spacing:0.909px;">View more comments</div>
<svg class="b" style="left:2396px;top:806px" width="22" height="22" viewBox="0 0 22 22" fill="none"><path d="M6.5 4.5 L13 11 L6.5 17.5" stroke="#555" stroke-width="2" stroke-linecap="round" stroke-linejoin="round"/></svg>
<div class="b" style="left:1908px;top:878px;width:532px;height:451.5px;box-sizing:border-box;border:1.5px solid #e3e3e3;border-radius:20px"></div>
<svg class="b" style="left:1937px;top:911.4px" width="41" height="41" viewBox="0 0 41 41" fill="none"><defs><linearGradient id="og911" x1="0" y1="0" x2="1" y2="1"><stop offset="0" stop-color="#1784d9"/><stop offset="1" stop-color="#0f5fc9"/></linearGradient></defs>
<path d="M10.8 2.3 A2 2 0 0 1 12.8 0.3 H35.8 A2 2 0 0 1 37.8 2.3 V28.5 H10.8 Z" fill="#0f78d4"/>
<path d="M10.8 2.3 A2 2 0 0 1 12.8 0.3 H35.8 A2 2 0 0 1 37.8 2.3 V6.1 H10.8 Z" fill="#0364b8"/>
<rect x="19.9" y="6.1" width="9.1" height="9.1" fill="#28a8ea"/><rect x="29" y="6.1" width="8.8" height="9.1" fill="#50d9ff"/>
<rect x="19.9" y="15.2" width="9.1" height="9" fill="#0078d4"/><rect x="29" y="15.2" width="8.8" height="9" fill="#28a8ea"/>
<rect x="10.8" y="24.2" width="18.2" height="4.3" fill="#0a64b8"/>
<path d="M9.2 21.5 L20.3 28 L38.9 20.9 V38 A2 2 0 0 1 36.9 40 H11.2 A2 2 0 0 1 9.2 38 Z" fill="#28a8ea"/>
<path d="M20.3 28 L38.9 20.9 V38.8 Z" fill="#1490df"/>
<path d="M20.3 28.2 L38.9 21" stroke="#0a2f6e" stroke-width="0.6" opacity="0.7"/>
<rect x="9.5" y="12" width="11.5" height="20.3" fill="#0a4f94" opacity="0.35"/>
<rect x="0" y="9.4" width="20.2" height="21.9" rx="1.8" fill="url(#og911)"/>
<ellipse cx="9.7" cy="20" rx="4.6" ry="5.5" stroke="#fff" stroke-width="2" fill="none"/></svg>
<div class="t" style="left:1996px;top:921.76px;font-size:22.13px;line-height:22.13px;color:#111;-webkit-text-stroke:0.55px #111;letter-spacing:1.019px;">Events</div>
<div class="b" style="left:2220.5px;top:907px;width:189.5px;height:50px;box-sizing:border-box;border:1.5px solid #dcdcdc;border-radius:13px;box-shadow:0 1.5px 1.5px rgba(0,0,0,0.07)"></div>
<div class="b" style="left:2365.5px;top:908px;width:1.5px;height:48px;background:#dcdcdc"></div>
<div class="t" style="left:2239.3px;top:921.50px;font-size:21.86px;line-height:21.86px;color:#3d32e0;-webkit-text-stroke:0.25px #3d32e0;letter-spacing:0.949px;">Add Event</div>
<svg class="b" style="left:2376px;top:923px" width="24" height="20" viewBox="0 0 24 20" fill="none"><path d="M6.5 7 L12 12.5 L17.5 7" stroke="#777" stroke-width="2" stroke-linecap="round" stroke-linejoin="round"/></svg>
<div class="b" style="left:1937px;top:985px;width:474px;height:1px;background:#e3e3e3"></div>
<div class="t" style="left:1937px;top:1020.46px;font-size:21.67px;line-height:21.67px;color:#1a1a1a;-webkit-text-stroke:0.40px #1a1a1a;letter-spacing:1.049px;">Upcoming</div>
<div class="b" style="left:1937px;top:1061.5px;width:473px;height:166.5px;box-sizing:border-box;border:1.5px solid #e3e3e3;border-left:none;border-radius:12px;"></div>
<div class="b" style="left:1937px;top:1061.5px;width:9.5px;height:166.5px;background:#5b50f5;border-radius:10px 0 0 10px"></div>
<div class="t" style="left:1975.7px;top:1089.01px;font-size:24.09px;line-height:24.09px;color:#111;-webkit-text-stroke:0.45px #111;letter-spacing:0.911px;">Digital Workshop</div>
<div class="t" style="left:1975.7px;top:1129.57px;font-size:23.90px;line-height:23.90px;color:#3d32e0;-webkit-text-stroke:0.25px #3d32e0;letter-spacing:0.900px;">Charlie Armstrong</div>
<div class="t" style="left:2189px;top:1129.57px;font-size:23.90px;line-height:23.90px;color:#6e6e6e;-webkit-text-stroke:0.25px #6e6e6e;letter-spacing:1.050px;">for</div>
<div class="t" style="left:2228px;top:1129.57px;font-size:23.90px;line-height:23.90px;color:#3d32e0;-webkit-text-stroke:0.25px #3d32e0;letter-spacing:0.890px;">Artechnical</div>
<div class="t" style="left:1975.7px;top:1178.67px;font-size:21.30px;line-height:21.30px;color:#7a7a7a;-webkit-text-stroke:0.25px #7a7a7a;letter-spacing:0.787px;">14:00 - 16:00</div>
<div class="b" style="left:2315.4px;top:1171px;width:38px;height:38px;background:#dcdafc;border-radius:50%"></div>
<div class="t" style="left:2315.4px;top:1171px;width:38px;height:38px;line-height:38px;text-align:center;font-size:14.5px;-webkit-text-stroke:0.3px currentColor;color:#4338c9">CA</div>
<div class="b" style="left:2353.4px;top:1171px;width:38px;height:38px;background:#fbdede;border-radius:50%;box-shadow:0 0 0 2px #fff"></div>
<div class="t" style="left:2353.4px;top:1171px;width:38px;height:38px;line-height:38px;text-align:center;font-size:14.5px;-webkit-text-stroke:0.3px currentColor;color:#a02a1a">AG</div>
<div class="b" style="left:1909px;top:1257.5px;width:530px;height:1.5px;background:#d0d0d0"></div>
<div class="t" style="left:1937.5px;top:1283.77px;font-size:21.30px;line-height:21.30px;color:#3d32e0;-webkit-text-stroke:0.25px #3d32e0;letter-spacing:0.847px;">View more events</div>
<svg class="b" style="left:2396px;top:1283px" width="22" height="22" viewBox="0 0 22 22" fill="none"><path d="M6.5 4.5 L13 11 L6.5 17.5" stroke="#555" stroke-width="2" stroke-linecap="round" stroke-linejoin="round"/></svg>
</div></body></html>
